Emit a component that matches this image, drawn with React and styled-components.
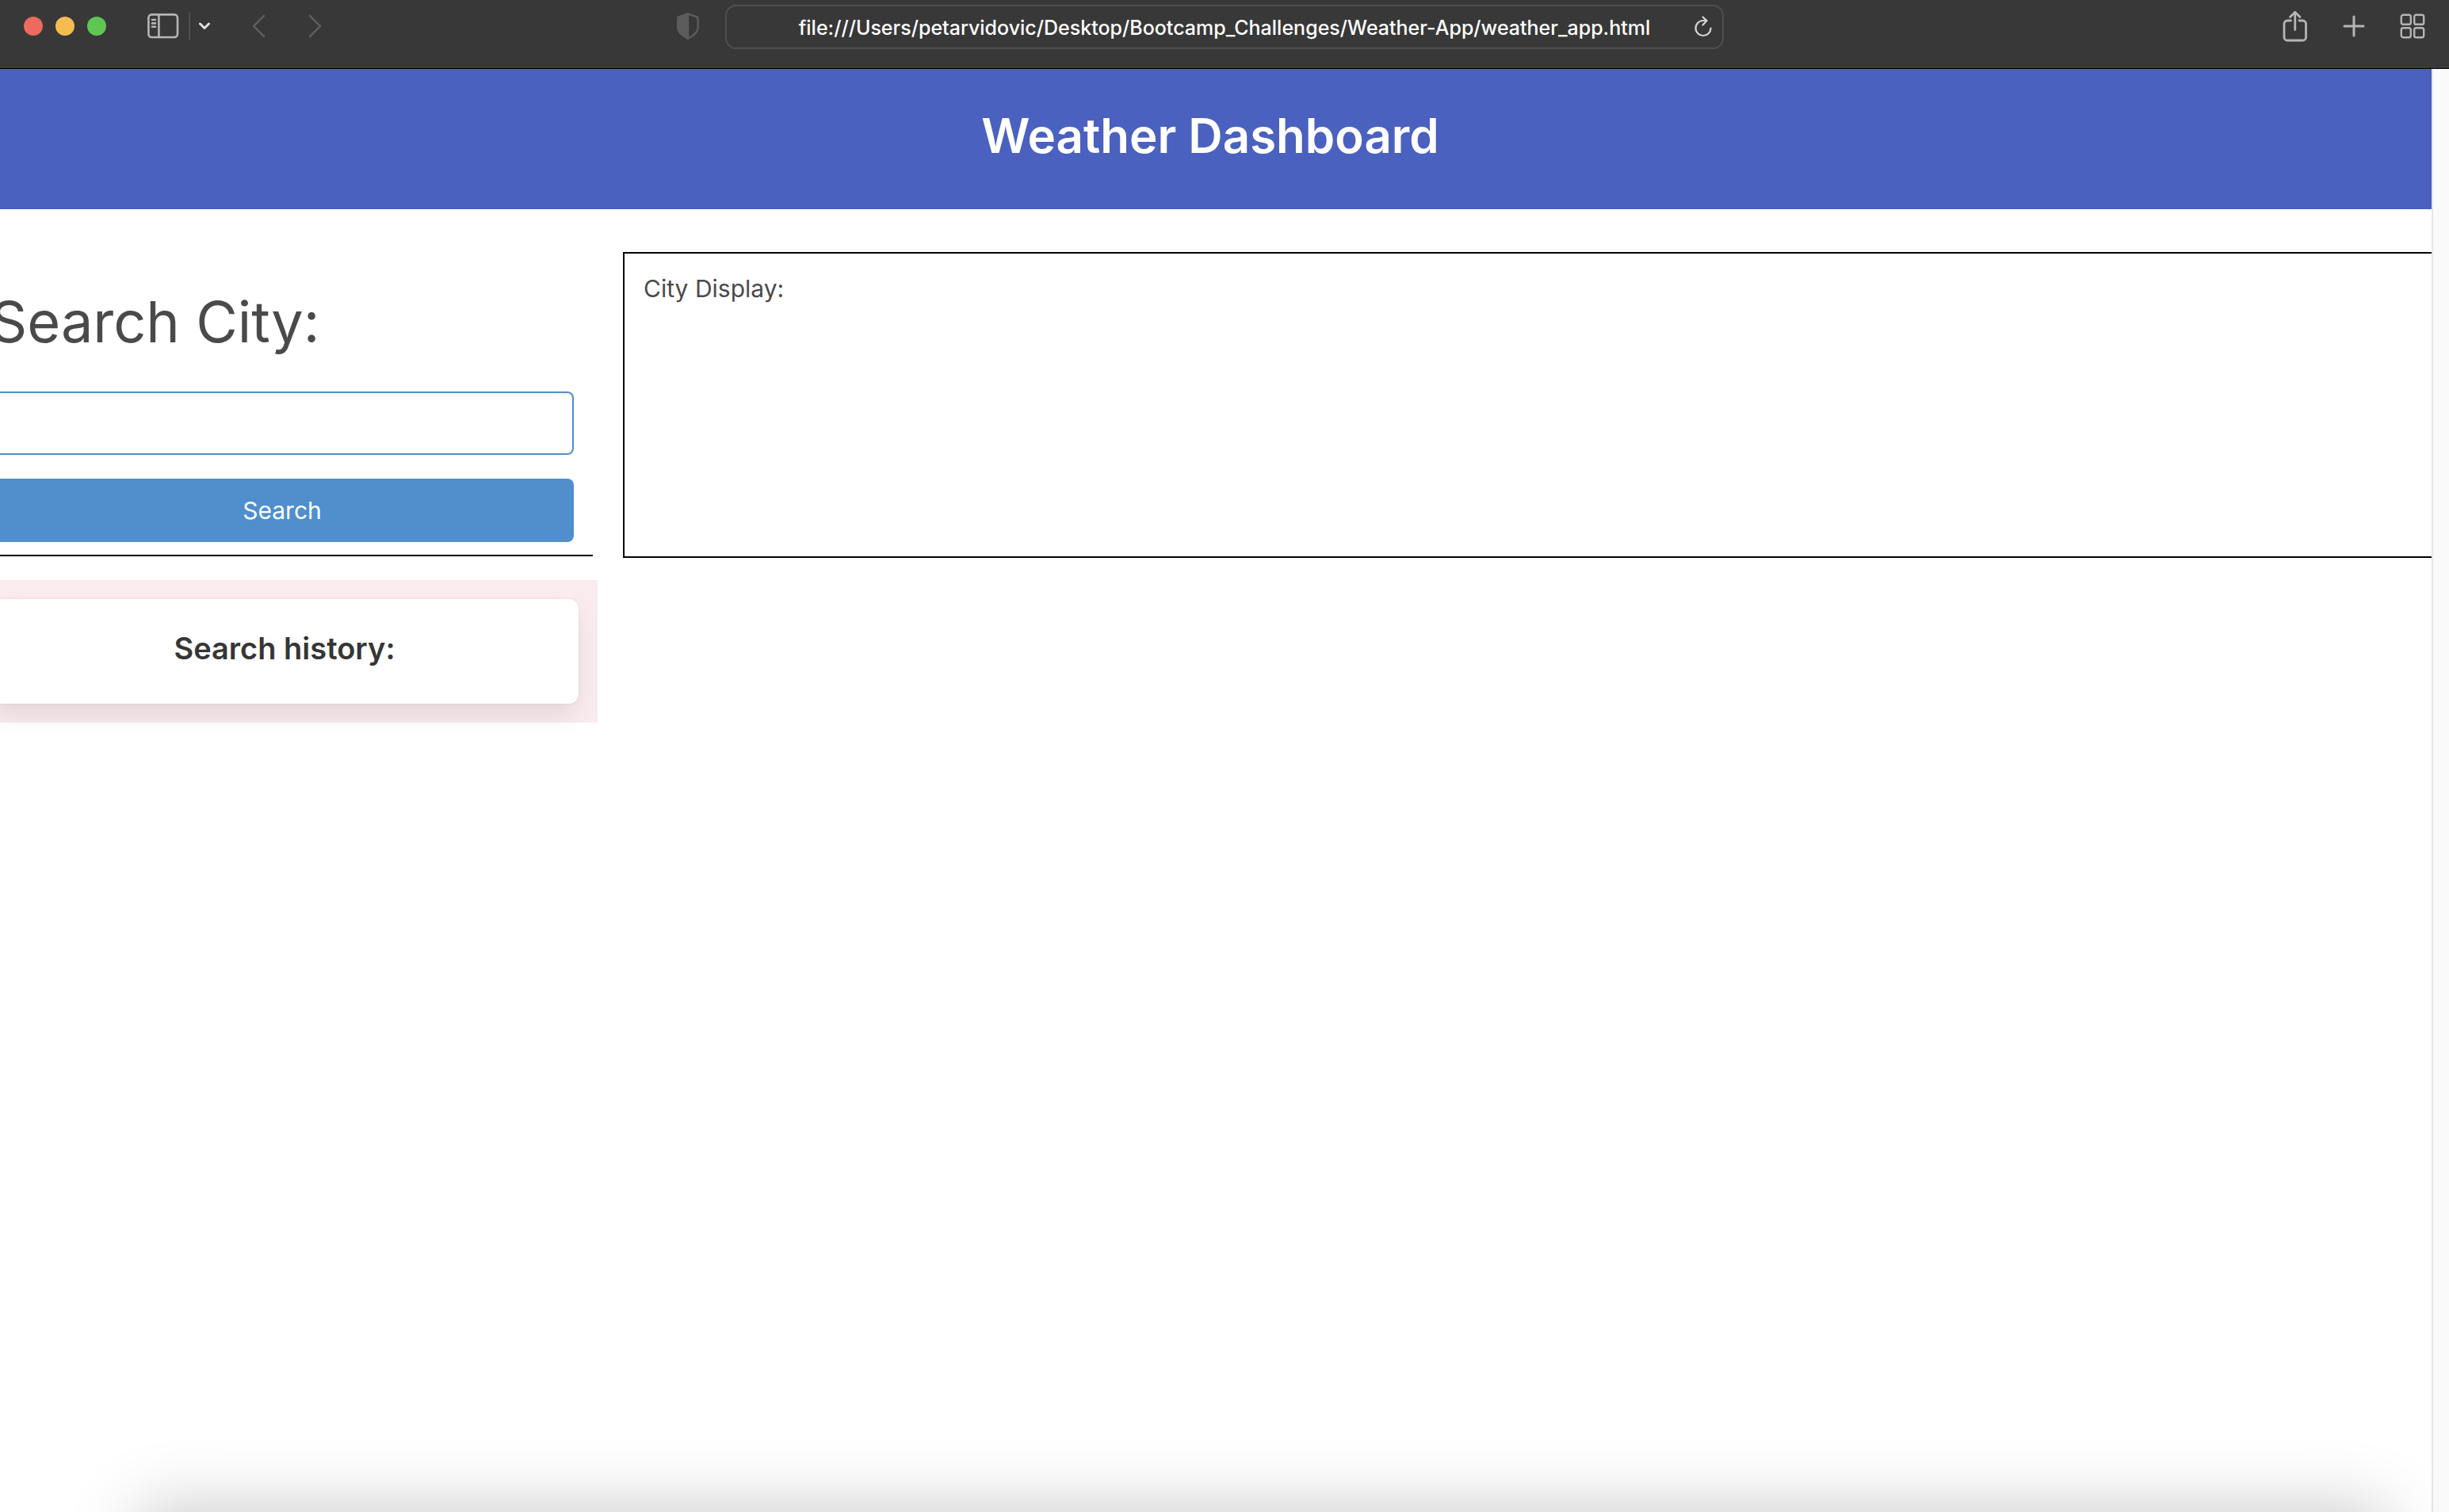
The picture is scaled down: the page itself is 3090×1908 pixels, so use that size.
import React from "react";
import styled, { createGlobalStyle } from "styled-components";

const GlobalStyle = createGlobalStyle`
  *, *::before, *::after { box-sizing: border-box; }
  html, body { margin: 0; background: #ffffff; }
  body { font-family: Inter, "Liberation Sans", sans-serif; color: #4a4a4a; }
  h1, h2, p, form { margin: 0; }
  button, input { font: inherit; }
`;

const Window = styled.div`
  position: relative;
  display: flex;
  flex-direction: column;
  min-height: 100vh;
  overflow: hidden;
`;

const Toolbar = styled.div`
  display: grid;
  grid-template-columns: minmax(0, 1fr) minmax(0, 1260px) minmax(0, 1fr);
  align-items: start;
  height: 87px;
  background: #383838;
  border-bottom: 1px solid #000000;
`;

const ToolGroup = styled.div`
  display: flex;
  align-items: center;
  height: 66px;
`;

const LeftTools = styled(ToolGroup)`
  padding: 0 32px 0 30px;
`;

const RightTools = styled(ToolGroup)`
  justify-content: flex-end;
  gap: 34px;
  padding-right: 26px;
`;

const Lights = styled.div`
  display: flex;
  gap: 16px;
  margin-right: 52px;
`;

const Light = styled.button`
  width: 24px;
  height: 24px;
  padding: 0;
  border: 0;
  border-radius: 50%;
  background: ${(p) => p.$color};
`;

const ToolButton = styled.button`
  display: grid;
  place-items: center;
  width: ${(p) => p.$width || 40}px;
  height: 40px;
  padding: 0;
  border: 0;
  background: none;
  color: ${(p) => p.$color || "#b5b5b5"};

  svg {
    display: block;
    fill: none;
    stroke: currentColor;
    stroke-linecap: round;
    stroke-linejoin: round;
  }
`;

const Divider = styled.span`
  width: 2px;
  height: 36px;
  margin-left: 12px;
  background: #4d4d4d;
`;

const History = styled.div`
  display: flex;
  gap: 32px;
  margin-left: 30px;
`;

const PrivacySlot = styled.div`
  margin-left: auto;
`;

const AddressBar = styled.div`
  display: flex;
  align-items: center;
  height: 56px;
  margin-top: 6px;
  padding: 0 4px 0 44px;
  border: 2px solid #4f4f4f;
  border-radius: 14px;
`;

const Address = styled.input`
  flex: 1;
  min-width: 0;
  height: 40px;
  padding: 2px 0 0;
  border: 0;
  outline: 0;
  background: none;
  color: #ffffff;
  font-size: 25px;
  font-weight: 500;
  text-align: center;
`;

const Viewport = styled.div`
  display: grid;
  grid-template-columns: minmax(0, 1fr) 22px;
  flex: 1;
`;

const Page = styled.div`
  overflow: hidden;
`;

const ScrollTrack = styled.div`
  background: #fafafa;
  border-left: 2px solid #e6e6e6;
`;

const Header = styled.header`
  height: 177px;
  padding: 48px 14px 0 0;
  background: #4a61bf;
  color: #ffffff;
  text-align: center;
`;

const Title = styled.h1`
  font-size: 60px;
  font-weight: 600;
  line-height: 72px;
`;

const Columns = styled.main`
  display: grid;
  grid-template-columns: minmax(0, 1fr) minmax(0, 3fr);
  align-items: start;
  gap: 32px;
  margin: 54px -88px 0 -36px;
`;

const SearchForm = styled.form`
  display: flex;
  flex-direction: column;
  margin-right: 6px;
  padding: 40px 24px 16px;
  border-bottom: 2px solid #000000;
`;

const SearchLabel = styled.label`
  margin-bottom: 40px;
  font-size: 72px;
  line-height: 96px;
`;

const CityInput = styled.input`
  height: 80px;
  margin-bottom: 30px;
  padding: 0 24px;
  border: 2px solid #508ecc;
  border-radius: 8px;
  background: #ffffff;
  box-shadow: inset 0 2px 4px rgba(10, 10, 10, 0.05);
  font-size: 30px;
`;

const SearchButton = styled.button`
  height: 80px;
  border: 0;
  border-radius: 8px;
  background: #508ecc;
  color: #ffffff;
  font-size: 30px;
`;

const HistoryPanel = styled.section`
  margin-top: 30px;
  padding: 24px;
  background: #faebee;
`;

const HistoryCard = styled.div`
  height: 132px;
  padding-top: 38px;
  border-radius: 12px;
  background: #ffffff;
  box-shadow: 0 16px 32px -4px rgba(10, 10, 10, 0.1), 0 0 0 2px rgba(10, 10, 10, 0.02);
`;

const HistoryTitle = styled.h2`
  color: #363636;
  font-size: 38px;
  font-weight: 600;
  line-height: 48px;
  text-align: center;
`;

const CityDisplay = styled.section`
  height: 386px;
  padding: 20px 24px;
  border: 2px solid #000000;
  font-size: 30px;
  line-height: 48px;
`;

const DockShadow = styled.div`
  position: absolute;
  right: 80px;
  bottom: -200px;
  left: 175px;
  height: 200px;
  box-shadow: 0 0 90px rgba(0, 0, 0, 0.24);
  pointer-events: none;
`;

const SidebarIcon = () => (
  <svg width="40" height="32" viewBox="0 0 40 32" strokeWidth="2.6">
    <rect x="1.4" y="1.4" width="36.6" height="28.6" rx="4" />
    <path d="M14.4 1.4v28.6M6 8h4M6 12.4h4M6 16.8h4" />
  </svg>
);

const ShieldIcon = () => (
  <svg width="30" height="34" viewBox="0 0 30 34" strokeWidth="2.4">
    <path d="M15 1.4 27.6 6v13c0 6-6 10.4-12.6 13.6C8.4 29.4 2.4 25 2.4 19V6z" />
    <path d="M15 1.4v31.2C8.4 29.4 2.4 25 2.4 19V6z" fill="currentColor" />
  </svg>
);

const ReloadIcon = () => (
  <svg width="24" height="28" viewBox="0 0 24 28" strokeWidth="2.2">
    <path d="M21.5 15.5A9.5 9.5 0 1 1 12 6h4M11.5 1.500 16.500 6l-5 5.500" />
  </svg>
);

const ShareIcon = () => (
  <svg width="32" height="40" viewBox="0 0 32 40" strokeWidth="2.8">
    <path d="M10.500 13H6a4 4 0 0 0-4 4v17a4 4 0 0 0 4 4h19.500a4 4 0 0 0 4-4V17a4 4 0 0 0-4-4H21M15.750 24.500V2.500M9.500 8.500l6.250-6.250L22 8.500" />
  </svg>
);

const PlusIcon = () => (
  <svg width="28" height="28" viewBox="0 0 28 28" strokeWidth="3">
    <path d="M14 2v24M2 14h24" />
  </svg>
);

const GridIcon = () => (
  <svg width="32" height="32" viewBox="0 0 32 32" strokeWidth="2.4">
    {[1.8, 18.2].map((x) =>
      [1.8, 18.2].map((y) => <rect key={`${x}-${y}`} x={x} y={y} width="12" height="12" rx="2.4" />)
    )}
  </svg>
);

export default function App() {
  return (
    <>
      <GlobalStyle />
      <Window>
        <Toolbar>
          <LeftTools>
            <Lights>
              <Light $color="#ed6a5f" aria-label="Close" />
              <Light $color="#f5bd4f" aria-label="Minimize" />
              <Light $color="#61c554" aria-label="Zoom" />
            </Lights>
            <ToolButton aria-label="Show sidebar">
              <SidebarIcon />
            </ToolButton>
            <Divider />
            <ToolButton aria-label="Tab groups" $width={36} $color="#e0e0e0">
              <svg width="16" height="12" viewBox="0 0 16 12" strokeWidth="3">
                <path d="M2.5 3 8 8.5 13.500 3" />
              </svg>
            </ToolButton>
            <History>
              <ToolButton aria-label="Back" $color="#5c5c5c">
                <svg width="18" height="30" viewBox="0 0 18 30" strokeWidth="2.6">
                  <path d="M16 2 3 15l13 13" />
                </svg>
              </ToolButton>
              <ToolButton aria-label="Forward" $color="#5c5c5c">
                <svg width="18" height="30" viewBox="0 0 18 30" strokeWidth="2.6">
                  <path d="M2 2l13 13L2 28" />
                </svg>
              </ToolButton>
            </History>
            <PrivacySlot>
              <ToolButton aria-label="Privacy report" $width={30} $color="#5c5c5c">
                <ShieldIcon />
              </ToolButton>
            </PrivacySlot>
          </LeftTools>
          <AddressBar>
            <Address
              aria-label="Address"
              defaultValue="file:///Users/petarvidovic/Desktop/Bootcamp_Challenges/Weather-App/weather_app.html"
            />
            <ToolButton aria-label="Reload" $color="#d6d6d6">
              <ReloadIcon />
            </ToolButton>
          </AddressBar>
          <RightTools>
            <ToolButton aria-label="Share">
              <ShareIcon />
            </ToolButton>
            <ToolButton aria-label="New tab">
              <PlusIcon />
            </ToolButton>
            <ToolButton aria-label="Tab overview">
              <GridIcon />
            </ToolButton>
          </RightTools>
        </Toolbar>
        <Viewport>
          <Page>
            <Header>
              <Title>Weather Dashboard</Title>
            </Header>
            <Columns>
              <div>
                <SearchForm onSubmit={(e) => e.preventDefault()}>
                  <SearchLabel htmlFor="city">Search City:</SearchLabel>
                  <CityInput id="city" type="text" />
                  <SearchButton type="submit">Search</SearchButton>
                </SearchForm>
                <HistoryPanel>
                  <HistoryCard>
                    <HistoryTitle>Search history:</HistoryTitle>
                  </HistoryCard>
                </HistoryPanel>
              </div>
              <CityDisplay>
                <p>City Display:</p>
              </CityDisplay>
            </Columns>
          </Page>
          <ScrollTrack />
        </Viewport>
        <DockShadow />
      </Window>
    </>
  );
}
